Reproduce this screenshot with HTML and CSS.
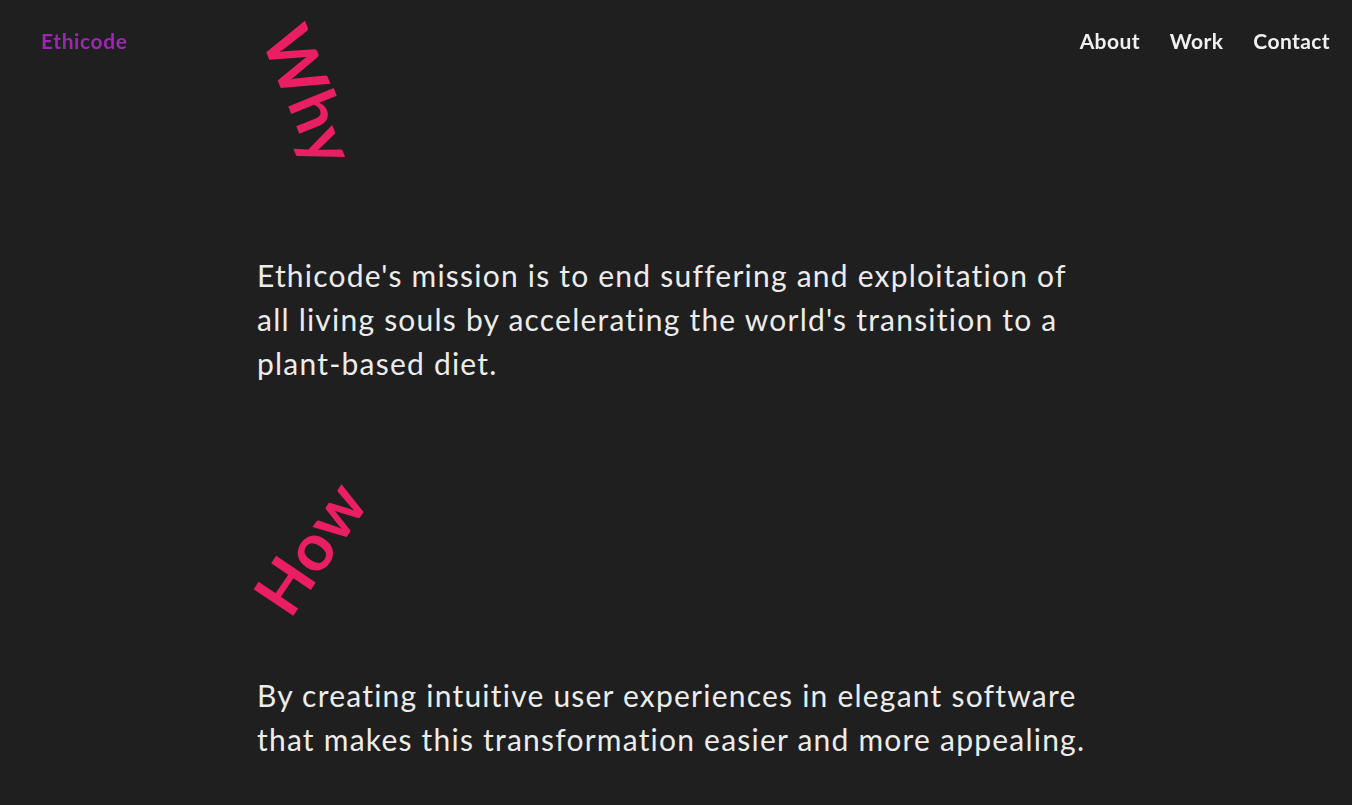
FILE: index.html
```html
<!DOCTYPE html>
<html lang="en">
<head>
<meta charset="utf-8">
<title>Ethicode</title>
<link rel="stylesheet" href="styles.css">
</head>
<body>
<header class="site-header">
  <a class="logo" href="#">Ethicode</a>
  <nav class="nav">
    <a href="#">About</a>
    <a href="#">Work</a>
    <a href="#">Contact</a>
  </nav>
</header>
<main class="content">
  <section class="block block-why">
    <h2 class="tilt tilt-why"><span>Why</span></h2>
    <p class="copy">Ethicode's mission is to end suffering and exploitation of all living souls by accelerating the world's transition to a plant-based diet.</p>
  </section>
  <section class="block block-how">
    <h2 class="tilt tilt-how"><span>How</span></h2>
    <p class="copy">By creating intuitive user experiences in elegant software that makes this transformation easier and more appealing.</p>
  </section>
</main>
</body>
</html>
```
FILE: styles.css
```css
* { box-sizing: border-box; }
html, body { margin: 0; padding: 0; }
body {
  background: #1f1f1f;
  color: #ececec;
  font-family: "Lato", "Noto Sans", sans-serif;
  width: 1352px;
  height: 805px;
  overflow: hidden;
}
a { text-decoration: none; }
.site-header {
  position: fixed;
  top: 0; left: 0; right: 0;
  display: flex;
  justify-content: space-between;
  align-items: center;
  height: 81px;
  padding: 0 22px 0 41px;
  z-index: 2;
}
.logo {
  color: #9c27b0;
  font-size: 21px;
  font-weight: 700;
  letter-spacing: 0.6px;
}
.nav { display: flex; gap: 30px; }
.nav a {
  color: #f0f0f0;
  font-size: 21px;
  font-weight: 700;
  letter-spacing: 0.4px;
}
.content {
  padding-left: 257px;
}
.tilt {
  margin: 0;
  width: 100px;
  height: 130px;
  display: flex;
  align-items: center;
  justify-content: center;
  color: #e91e63;
  font-size: 66px;
  font-weight: 700;
  line-height: 1;
  letter-spacing: 1px;
}
.tilt span { display: block; white-space: nowrap; }
.tilt-why { margin-top: 30px; padding-left: 6px; }
.tilt-why span { transform: rotate(68deg); }
.tilt-how { margin-top: 97px; padding-left: 6px; }
.tilt-how span { transform: rotate(-56deg); }
.copy {
  margin: 0;
  max-width: 840px;
  font-size: 30px;
  line-height: 44px;
  font-weight: 400;
  letter-spacing: 1.22px;
}
.block-why .copy { margin-top: 93px; }
.block-how .copy { margin-top: 61px; }
```
